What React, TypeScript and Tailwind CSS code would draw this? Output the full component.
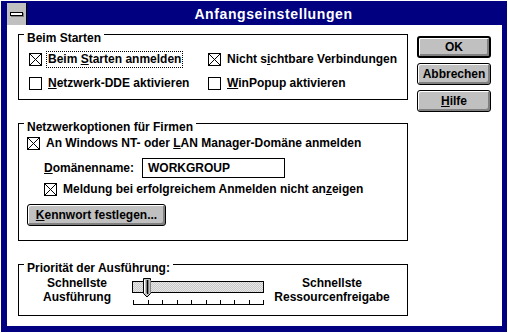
import type { ReactNode } from 'react';

function Box({ checked }: { checked?: boolean }) {
  return (
    <svg width="13" height="13" viewBox="0 0 13 13" className="shrink-0" shapeRendering="crispEdges">
      <rect x="0.5" y="0.5" width="12" height="12" fill="#fff" stroke="#000" />
      {checked && <path d="M1 1L12 12M12 1L1 12" stroke="#000" strokeWidth="1" shapeRendering="auto" />}
    </svg>
  );
}

function Check({ checked, focused, children }: { checked?: boolean; focused?: boolean; children: ReactNode }) {
  return (
    <div className="flex items-center h-[18px]">
      <Box checked={checked} />
      <span
        className={`ml-[4px] px-px leading-[15px] border border-dotted whitespace-nowrap ${focused ? 'border-black' : 'border-transparent'}`}
      >
        {children}
      </span>
    </div>
  );
}

function Group({ label, className, children }: { label: string; className?: string; children?: ReactNode }) {
  return (
    <div className={`relative border border-black ${className ?? ''}`}>
      <span className="absolute left-[5px] -top-[4px] bg-white px-[3px] leading-[14px] whitespace-nowrap">{label}</span>
      {children}
    </div>
  );
}

function Btn({ children, def, className }: { children: ReactNode; def?: boolean; className?: string }) {
  return (
    <div
      className={`flex items-center justify-center rounded-[3px] bg-[#c0c0c0] border-black ${def ? 'border-2' : 'border'} shadow-[inset_1px_1px_0_#fff,inset_-2px_-2px_0_#808080] whitespace-nowrap ${className ?? ''}`}
    >
      {children}
    </div>
  );
}

function Slider() {
  const ticks = [2, 17, 31, 46, 60, 75, 89, 103, 118, 132];
  return (
    <svg width="134" height="28" viewBox="0 0 134 28" className="shrink-0 mt-px" shapeRendering="crispEdges">
      <defs>
        <pattern id="dither" width="2" height="2" patternUnits="userSpaceOnUse">
          <rect width="2" height="2" fill="#c8c8c8" />
          <rect width="1" height="1" fill="#e8e8e8" />
          <rect x="1" y="1" width="1" height="1" fill="#e8e8e8" />
        </pattern>
      </defs>
      <rect x="1.5" y="4.5" width="131" height="11" fill="url(#dither)" stroke="#000" />
      <path d="M12.5 1.5H19.5V16.5L16 20L12.5 16.5Z" fill="#c0c0c0" stroke="#000" shapeRendering="auto" />
      <path d="M13.5 2.5V16" stroke="#fff" />
      <path d="M15.5 3V16M17.5 3V17M19 3V16" stroke="#808080" />
      <path d="M16.5 3V17" stroke="#000" />
      <path d="M2 27.5H133" stroke="#000" />
      {ticks.map((t) => (
        <path key={t} d={`M${t + 0.5} 23V28`} stroke="#000" />
      ))}
    </svg>
  );
}

export default function App() {
  return (
    <div className="w-[508px] h-[333px] bg-white pl-px pt-px font-['Liberation_Sans',Arial,sans-serif] font-bold text-[12px] text-black">
      <div className="w-[506px] h-[331px] bg-[#000080] pl-[6px] pr-[5px] pt-[2px] pb-[6px] flex flex-col">
        <div className="h-[22px] flex shrink-0">
          <div className="w-[20px] bg-[#c0c0c0] border-r border-black flex items-center justify-center">
            <div className="w-[13px] h-[4px] bg-white border border-black shadow-[1px_1px_0_#808080]" />
          </div>
          <div className="flex-1 flex items-center justify-center text-white text-[14px] tracking-[0.6px] pl-[18px]">
            Anfangseinstellungen
          </div>
        </div>
        <div className="flex-1 bg-white flex pl-[11px]">
          <div className="w-[390px] flex flex-col">
            <Group label="Beim Starten" className="mt-[9px] h-[66px]">
              <div className="pt-[15px] pl-[10px] grid grid-cols-[179px_1fr] gap-y-[6px]">
                <Check checked focused>
                  Beim <u>S</u>tarten anmelden
                </Check>
                <Check checked>
                  Nicht s<u>i</u>chtbare Verbindungen
                </Check>
                <Check>
                  <u>N</u>etzwerk-DDE aktivieren
                </Check>
                <Check>
                  <u>W</u>inPopup aktivieren
                </Check>
              </div>
            </Group>
            <Group label="Netzwerkoptionen für Firmen" className="mt-[23px] h-[118px]">
              <div className="flex flex-col items-start">
                <div className="mt-[10px] ml-[8px]">
                  <Check checked>
                    An Windows NT- oder <u>L</u>AN Manager-Domäne anmelden
                  </Check>
                </div>
                <div className="mt-[6px] ml-[25px] flex items-center h-[20px]">
                  <span className="w-[98px] whitespace-nowrap">
                    <u>D</u>omänenname:
                  </span>
                  <div className="w-[143px] h-[20px] border border-black pl-[5px] flex items-center">WORKGROUP</div>
                </div>
                <div className="mt-[2px] ml-[25px]">
                  <Check checked>
                    Meldung bei erfolgreichem Anmelden nicht an<u>z</u>eigen
                  </Check>
                </div>
                <Btn className="mt-[6px] ml-[8px] w-[139px] h-[22px]">
                  <span>
                    <u>K</u>ennwort festlegen...
                  </span>
                </Btn>
              </div>
            </Group>
            <Group label="Priorität der Ausführung:" className="mt-[23px] h-[52px]">
              <div className="flex items-start pt-[11px] leading-[14px]">
                <div className="w-[112px] pl-[4px] text-center">
                  Schnellste
                  <br />
                  Ausführung
                </div>
                <Slider />
                <div className="flex-1 pr-[8px] text-center">
                  Schnellste
                  <br />
                  Ressourcenfreigabe
                </div>
              </div>
            </Group>
          </div>
          <div className="ml-[9px] pt-[11px] w-[74px] flex flex-col gap-[5px]">
            <Btn def className="h-[22px]">
              OK
            </Btn>
            <Btn className="h-[22px]">Abbrechen</Btn>
            <Btn className="h-[22px]">
              <span>
                <u>H</u>ilfe
              </span>
            </Btn>
          </div>
        </div>
      </div>
    </div>
  );
}
